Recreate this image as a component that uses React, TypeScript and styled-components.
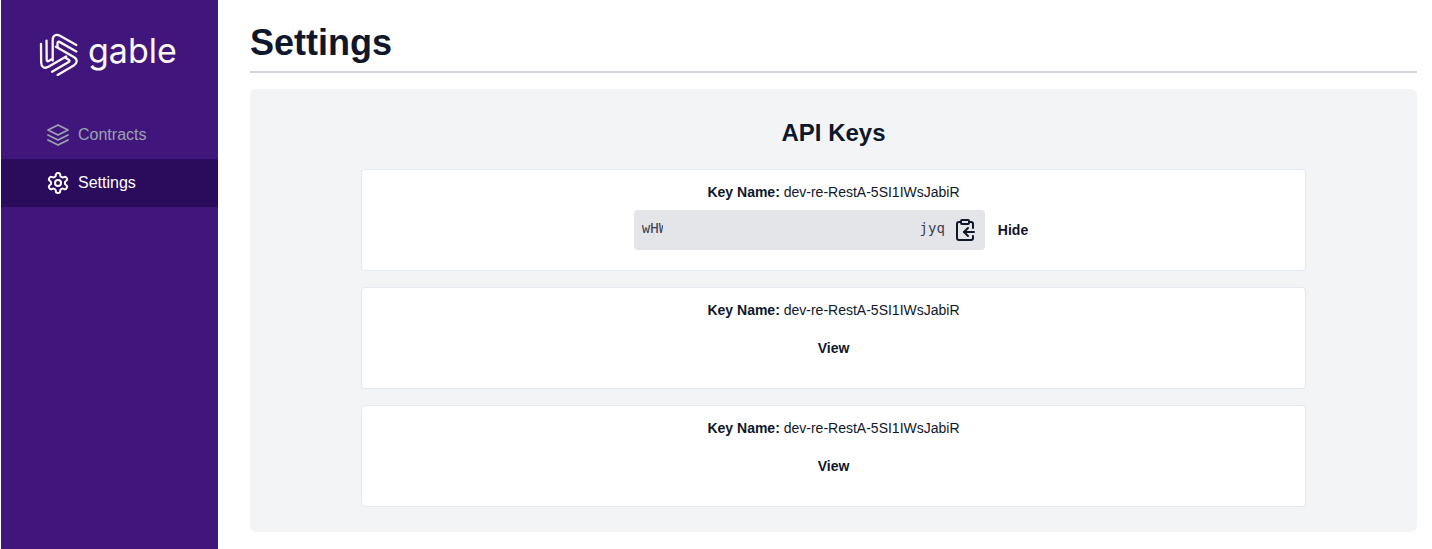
import React from "react";
import styled, { createGlobalStyle } from "styled-components";

const Global = createGlobalStyle`
  *, *::before, *::after { box-sizing: border-box; }
  body { margin: 0; background: #fff; color: #0f172a; font-family: "Liberation Sans", Arial, Helvetica, sans-serif; }
  h1, h2, p { margin: 0; }
`;

const Shell = styled.div`
  display: flex;
  height: 549px;
  padding-left: 1px;
  overflow: hidden;
`;

const Sidebar = styled.aside`
  width: 217px;
  flex: none;
  background: #40167c;
`;

const Brand = styled.div`
  display: flex;
  height: 111px;
  padding: 33px 0 0 38px;
  color: #faf7f2;
`;

const LogoMark = styled.svg`
  width: 40px;
  height: 43px;
  flex: none;
`;

const Wordmark = styled.span`
  margin: -4px 0 0 9px;
  font-family: Inter, sans-serif;
  font-size: 34px;
  font-weight: 400;
  line-height: 44px;
`;

const NavItem = styled.a<{ $active?: boolean }>`
  display: flex;
  align-items: center;
  gap: 8px;
  height: 48px;
  padding-left: 45px;
  font-size: 16px;
  line-height: 24px;
  color: ${(p) => (p.$active ? "#fff" : "#9ca3af")};
  background: ${(p) => (p.$active ? "#2a0b5c" : "transparent")};
`;

const Icon = styled.svg.attrs({ viewBox: "0 0 24 24" })`
  width: 24px;
  height: 24px;
  flex: none;
  fill: none;
  stroke: currentColor;
  stroke-linecap: round;
  stroke-linejoin: round;
`;

const Main = styled.main`
  flex: 1;
  padding: 22px 15px 0 32px;
`;

const PageTitle = styled.h1`
  height: 51px;
  padding-top: 1px;
  border-bottom: 2px solid #d1d5db;
  font-size: 36px;
  line-height: 40px;
`;

const Panel = styled.section`
  display: flex;
  flex-direction: column;
  gap: 16px;
  height: 443px;
  margin-top: 16px;
  padding: 24px 111px;
  border-radius: 6px;
  background: #f3f4f6;
`;

const PanelTitle = styled.h2`
  height: 40px;
  font-size: 24px;
  line-height: 40px;
  text-align: center;
`;

const Card = styled.article`
  display: flex;
  flex-direction: column;
  align-items: center;
  height: 102px;
  padding-top: 12px;
  border: 1px solid #e2e8f0;
  border-radius: 4px;
  background: #fff;
  font-size: 14px;
  line-height: 20px;
`;

const KeyRow = styled.div`
  display: flex;
  align-items: center;
  height: 40px;
  margin-top: 8px;
  padding-right: 5px;
`;

const KeyBox = styled.div`
  display: flex;
  align-items: center;
  width: 351px;
  height: 40px;
  padding: 0 8px;
  border-radius: 4px;
  background: #e4e5e9;
`;

const KeyText = styled.code`
  display: flex;
  justify-content: space-between;
  width: 303px;
  margin-right: 8px;
  padding-bottom: 4px;
  color: #374151;
  font-family: "DejaVu Sans Mono", monospace;
  font-size: 14px;
`;

const KeyStart = styled.span`
  width: 21px;
  overflow: hidden;
`;

const TextButton = styled.button`
  height: 36px;
  padding: 0;
  border: 0;
  background: none;
  color: inherit;
  font: bold 14px/20px "Liberation Sans", Arial, sans-serif;
`;

const HideButton = styled(TextButton)`
  margin-left: 13px;
`;

const ViewRow = styled.div`
  display: flex;
  margin-top: 10px;
`;

const LayersIcon = () => (
  <Icon strokeWidth={1.8}>
    <path d="M12 2 2 7l10 5 10-5Z" />
    <path d="m2 17 10 5 10-5" />
    <path d="m2 12 10 5 10-5" />
  </Icon>
);

const GearIcon = () => (
  <Icon strokeWidth={2}>
    <path d="M12.22 2h-.44a2 2 0 0 0-2 2v.18a2 2 0 0 1-1 1.73l-.43.25a2 2 0 0 1-2 0l-.15-.08a2 2 0 0 0-2.73.73l-.22.38a2 2 0 0 0 .73 2.73l.15.1a2 2 0 0 1 1 1.72v.51a2 2 0 0 1-1 1.74l-.15.09a2 2 0 0 0-.73 2.73l.22.38a2 2 0 0 0 2.73.73l.15-.08a2 2 0 0 1 2 0l.43.25a2 2 0 0 1 1 1.73V20a2 2 0 0 0 2 2h.44a2 2 0 0 0 2-2v-.18a2 2 0 0 1 1-1.73l.43-.25a2 2 0 0 1 2 0l.15.08a2 2 0 0 0 2.73-.73l.22-.39a2 2 0 0 0-.73-2.73l-.15-.08a2 2 0 0 1-1-1.74v-.5a2 2 0 0 1 1-1.74l.15-.09a2 2 0 0 0 .73-2.73l-.22-.38a2 2 0 0 0-2.73-.73l-.15.08a2 2 0 0 1-2 0l-.43-.25a2 2 0 0 1-1-1.73V4a2 2 0 0 0-2-2z" />
    <circle cx="12" cy="12" r="3" />
  </Icon>
);

const ClipboardIcon = () => (
  <Icon strokeWidth={2}>
    <rect width="8" height="4" x="8" y="2" rx="1" ry="1" />
    <path d="M8 4H6a2 2 0 0 0-2 2v14a2 2 0 0 0 2 2h12a2 2 0 0 0 2-2v-2" />
    <path d="M16 4h2a2 2 0 0 1 2 2v4" />
    <path d="M21 14H11" />
    <path d="m15 10-4 4 4 4" />
  </Icon>
);

const Logo = () => (
  <LogoMark viewBox="0 0 40 43" fill="none" stroke="currentColor" strokeWidth="2.3" strokeLinecap="round">
    {[0, 120, 240].map((angle) => (
      <g key={angle} transform={`rotate(${angle} 19.3 21.6)`}>
        <path d="M37.3 12 21 2.8C17.5 .8 13.7 2 13.7 7V27.5" />
        <path d="M37.3 18.4 20.5 8.9Q18.5 8 18.5 10.5V14" />
      </g>
    ))}
  </LogoMark>
);

const KeyCard = ({ visible }: { visible?: boolean }) => (
  <Card>
    <p><b>Key Name:</b> dev-re-RestA-5SI1IWsJabiR</p>
    {visible ? (
      <KeyRow>
        <KeyBox>
          <KeyText><KeyStart>wHW</KeyStart><span>jyq</span></KeyText>
          <ClipboardIcon />
        </KeyBox>
        <HideButton>Hide</HideButton>
      </KeyRow>
    ) : (
      <ViewRow><TextButton>View</TextButton></ViewRow>
    )}
  </Card>
);

export default function App() {
  return (
    <>
      <Global />
      <Shell>
        <Sidebar>
          <Brand><Logo /><Wordmark>gable</Wordmark></Brand>
          <nav>
            <NavItem><LayersIcon />Contracts</NavItem>
            <NavItem $active><GearIcon />Settings</NavItem>
          </nav>
        </Sidebar>
        <Main>
          <PageTitle>Settings</PageTitle>
          <Panel>
            <PanelTitle>API Keys</PanelTitle>
            <KeyCard visible />
            <KeyCard />
            <KeyCard />
          </Panel>
        </Main>
      </Shell>
    </>
  );
}
